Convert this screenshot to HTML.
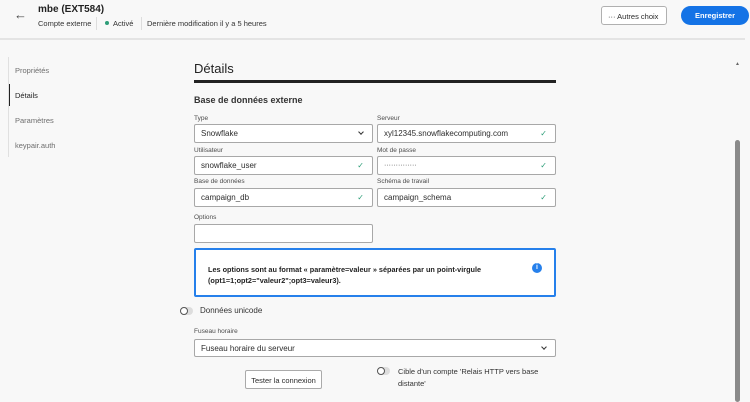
<!DOCTYPE html>
<html><head><meta charset="utf-8"><style>
*{box-sizing:border-box;margin:0;padding:0}
body{width:750px;height:402px;overflow:hidden;background:#f8f8f8;font-family:"Liberation Sans",sans-serif;color:#2c2c2c;position:relative}
.a{position:absolute;white-space:nowrap}
.lbl{font-size:6.5px;color:#4b4b4b}
.in{position:absolute;height:19px;background:#fff;border:1px solid #a8a8a8;border-radius:2px;font-size:8px;padding:4px 6px;color:#2c2c2c}
.ck{position:absolute;right:8px;top:4px;color:#2d9d78;font-size:8px}
.cv{position:absolute;right:9px;top:5px;width:4px;height:4px;border-right:1.3px solid #333;border-bottom:1.3px solid #333;transform:rotate(45deg)}
.nav{font-size:7.5px;color:#6e6e6e;left:15px}
.tg{position:absolute;width:13px;height:8px;border-radius:4px;background:#ddd}
.tg:after{content:"";position:absolute;left:0;top:0;width:8px;height:8px;box-sizing:border-box;border:1.5px solid #555;border-radius:50%;background:#fff}
</style></head><body>
<div class="a" style="left:14px;top:7px;font-size:13px;color:#444">&#8592;</div>
<div class="a" style="left:38px;top:4px;font-size:10px;font-weight:bold;color:#222">mbe (EXT584)</div>
<div class="a" style="left:38px;top:19px;font-size:7.5px;color:#333">Compte externe</div>
<div class="a" style="left:96px;top:17px;width:1px;height:13px;background:#ddd"></div>
<div class="a" style="left:105px;top:21px;width:4px;height:4px;border-radius:50%;background:#2d9d78"></div>
<div class="a" style="left:113px;top:19px;font-size:7.5px;color:#333">Activé</div>
<div class="a" style="left:141px;top:17px;width:1px;height:13px;background:#ddd"></div>
<div class="a" style="left:147px;top:19px;font-size:7.5px;color:#333">Dernière modification il y a 5 heures</div>
<div class="a" style="left:601px;top:6px;width:66px;height:19px;border:1px solid #b0b0b0;border-radius:3px;background:#fff;font-size:7.5px;padding:5px 0 0 6px">··· Autres choix</div>
<div class="a" style="left:681px;top:6px;width:68px;height:19px;border-radius:10px;background:#1473e6;color:#fff;font-weight:bold;font-size:7.5px;text-align:center;padding-top:5px">Enregistrer</div>
<div class="a" style="left:0;top:38px;width:745px;height:2px;background:#e4e4e4"></div>
<div class="a nav" style="top:66px">Propriétés</div>
<div class="a nav" style="top:91px;color:#222">Détails</div>
<div class="a" style="left:8px;top:84px;width:2px;height:22px;background:#222"></div>
<div class="a" style="left:8px;top:57px;width:1px;height:100px;background:#e0e0e0"></div>
<div class="a nav" style="top:116px">Paramètres</div>
<div class="a nav" style="top:141px">keypair.auth</div>
<div class="a" style="left:194px;top:61px;font-size:13px;color:#222">Détails</div>
<div class="a" style="left:194px;top:80px;width:362px;height:3px;background:#222"></div>
<div class="a" style="left:194px;top:95px;font-size:9px;font-weight:bold;color:#333">Base de données externe</div>
<div class="a lbl" style="left:194px;top:115px">Type</div>
<div class="in" style="left:194px;top:124px;width:179px">Snowflake<span class="cv"></span></div>
<div class="a lbl" style="left:377px;top:115px">Serveur</div>
<div class="in" style="left:377px;top:124px;width:179px">xyl12345.snowflakecomputing.com<span class="ck">✓</span></div>
<div class="a lbl" style="left:194px;top:147px">Utilisateur</div>
<div class="in" style="left:194px;top:156px;width:179px">snowflake_user<span class="ck">✓</span></div>
<div class="a lbl" style="left:377px;top:147px">Mot de passe</div>
<div class="in" style="left:377px;top:156px;width:179px;font-size:7px;padding-top:5px;color:#444">··············<span class="ck">✓</span></div>
<div class="a lbl" style="left:194px;top:178px">Base de données</div>
<div class="in" style="left:194px;top:188px;width:179px">campaign_db<span class="ck">✓</span></div>
<div class="a lbl" style="left:377px;top:178px">Schéma de travail</div>
<div class="in" style="left:377px;top:188px;width:179px">campaign_schema<span class="ck">✓</span></div>
<div class="a lbl" style="left:194px;top:214px">Options</div>
<div class="in" style="left:194px;top:224px;width:179px"></div>
<div class="a" style="left:194px;top:248px;width:362px;height:49px;border:2px solid #2680eb;border-radius:2px;background:#fff"></div>
<div class="a" style="left:208px;top:264px;font-size:7.3px;font-weight:bold;color:#222;line-height:11px">Les options sont au format « paramètre=valeur » séparées par un point-virgule<br>(opt1=1;opt2="valeur2";opt3=valeur3).</div>
<div class="a" style="left:532px;top:263px;width:10px;height:10px;border-radius:50%;background:#2680eb;color:#fff;font-size:7px;font-weight:bold;text-align:center;line-height:10px">i</div>
<div class="tg" style="left:180px;top:307px"></div>
<div class="a" style="left:200px;top:306px;font-size:8px;color:#333">Données unicode</div>
<div class="a lbl" style="left:194px;top:328px">Fuseau horaire</div>
<div class="in" style="left:194px;top:339px;width:362px;height:18px;padding-top:4px">Fuseau horaire du serveur<span class="cv"></span></div>
<div class="a" style="left:245px;top:370px;width:77px;height:19px;border:1px solid #aaa;border-radius:2px;background:#fff;font-size:7.5px;text-align:center;padding-top:5px">Tester la connexion</div>
<div class="tg" style="left:377px;top:367px"></div>
<div class="a" style="left:398px;top:366px;font-size:7.5px;color:#333;line-height:12px">Cible d'un compte 'Relais HTTP vers base<br>distante'</div>
<div class="a" style="left:735px;top:61px;font-size:5px;color:#666">▲</div>
<div class="a" style="left:735px;top:140px;width:5px;height:262px;border-radius:3px;background:#8a8a8a"></div>
</body></html>
